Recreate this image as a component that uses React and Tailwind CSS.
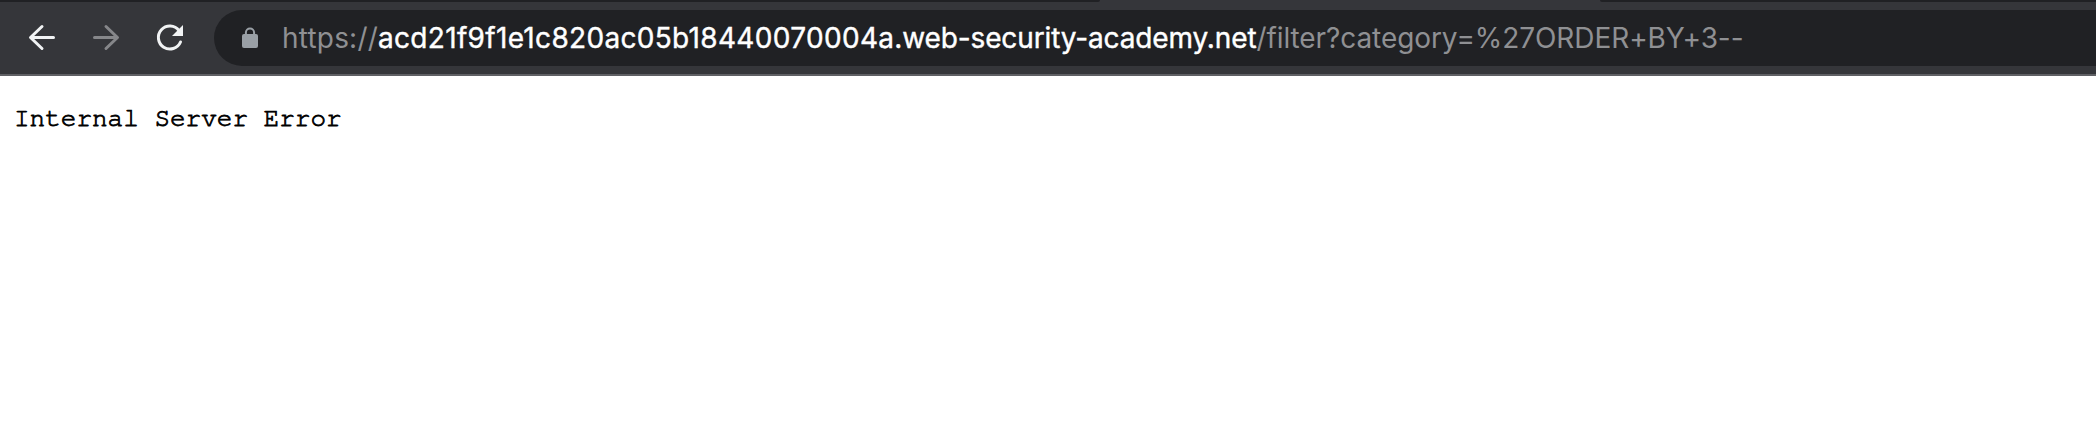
function BackIcon() {
  return (
    <svg className="h-9 w-9 shrink-0" viewBox="0 0 36 36" fill="none" stroke="#f1f3f4" strokeWidth="3" strokeLinecap="round" strokeLinejoin="round">
      <path d="M29.5 17.5H7M18 6.5l-11.500 11L18 28.500" />
    </svg>
  );
}

function ForwardIcon() {
  return (
    <svg className="h-9 w-9 shrink-0" viewBox="0 0 36 36" fill="none" stroke="#86878a" strokeWidth="3" strokeLinecap="round" strokeLinejoin="round">
      <path d="M6.500 17.500H29M18 6.500l11.500 11L18 28.500" />
    </svg>
  );
}

function ReloadIcon() {
  return (
    <svg className="h-9 w-9 shrink-0" viewBox="0 0 36 36">
      <path d="M27 10.500A11.500 11.500 0 1 0 28.500 22" fill="none" stroke="#f1f3f4" strokeWidth="3" strokeLinecap="round" />
      <path d="M31 5V16H20z" fill="#f1f3f4" />
    </svg>
  );
}

function LockIcon() {
  return (
    <svg className="h-[22px] w-4 shrink-0" viewBox="0 0 16 22">
      <path d="M3.900 8V5.500a4.100 4.100 0 0 1 8.200 0V8" fill="none" stroke="#9aa0a6" strokeWidth="2" />
      <rect y="7" width="16" height="14" rx="2" fill="#9aa0a6" />
    </svg>
  );
}

export default function App() {
  return (
    <div className="flex h-[444px] w-full flex-col overflow-hidden bg-white">
      <div className="flex h-0.5 shrink-0 justify-between bg-[#35363a]">
        <div className="w-[1100px] rounded-br-[2px] bg-[#202124]" />
        <div className="w-[496px] rounded-bl-[2px] bg-[#202124]" />
      </div>
      <header className="flex h-[74px] shrink-0 items-center border-b-2 border-[#5f6064] bg-[#35363a] pl-6">
        <BackIcon />
        <div className="ml-7 flex"><ForwardIcon /></div>
        <div className="ml-7 flex"><ReloadIcon /></div>
        <div className="ml-[26px] flex h-14 flex-1 items-center rounded-l-full bg-[#202124] pl-7">
          <LockIcon />
          <div className="ml-6 whitespace-pre font-['Inter',sans-serif] text-[28px] leading-[56px] text-[#8f9093]">
            <span className="tracking-[0.2px]">https://</span>
            <span className="text-white [-webkit-text-stroke:0.4px_white]">
              <span className="tracking-[0.32px]">acd21f9f1e1c820ac05b18440070004a</span>
              <span className="tracking-[-0.13px]">.web-security-academy.net</span>
            </span>
            <span className="tracking-[-0.08px]">/filter?category=%27ORDER+BY+3--</span>
          </div>
        </div>
      </header>
      <pre className="pl-[14px] pt-[23px] font-['Courier_10_Pitch','Nimbus_Mono_PS','FreeMono','Liberation_Mono',monospace] text-[26px] leading-[39px] text-black [-webkit-text-stroke:0.8px_black]">Internal Server Error</pre>
    </div>
  );
}
